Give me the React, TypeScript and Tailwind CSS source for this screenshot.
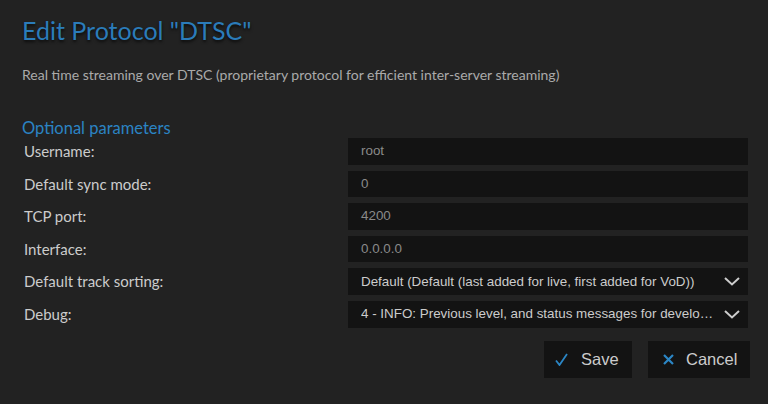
const fields = [
  { label: 'Username:', value: 'root' },
  { label: 'Default sync mode:', value: '0' },
  { label: 'TCP port:', value: '4200' },
  { label: 'Interface:', value: '0.0.0.0' },
];

const selects = [
  { label: 'Default track sorting:', value: 'Default (Default (last added for live, first added for VoD))' },
  { label: 'Debug:', value: '4 - INFO: Previous level, and status messages for developers' },
];

const heading = { fontFamily: 'Lato, "Open Sans", sans-serif' };
const body = { fontFamily: '"Liberation Sans", Arial, sans-serif' };

function Chevron() {
  return (
    <svg width="16" height="9" viewBox="0 0 16 9" fill="none" stroke="#cccccc" strokeWidth="2" className="shrink-0">
      <path d="M1 1 L8 7.5 L15 1" />
    </svg>
  );
}

export default function App() {
  return (
    <div className="min-h-[404px] bg-[#222222] px-[22px] pt-[14px] text-[#cccccc]" style={heading}>
      <h1 className="text-[25px] leading-[32px] text-[#2b7cba] [text-shadow:0_2px_3px_rgba(0,0,0,0.7)]">
        Edit Protocol "DTSC"
      </h1>
      <p className="mt-[19px] text-[14px] leading-[20px] text-[#aaaaaa]">
        Real time streaming over DTSC (proprietary protocol for efficient inter-server streaming)
      </p>

      <h2 className="mt-[33px] text-[16.5px] leading-[20px] text-[#2b84c4]">Optional parameters</h2>

      <div className="grid grid-cols-[326px_400px] gap-y-[6px]">
        {fields.map((f) => (
          <div key={f.label} className="contents">
            <div className="flex h-[26.6px] items-center pl-[2px] text-[15px]">{f.label}</div>
            <div
              className="flex h-[26.6px] items-center bg-[#131313] px-[13px] text-[13.4px] text-[#8a8a8a]"
              style={body}
            >
              {f.value}
            </div>
          </div>
        ))}
        {selects.map((s) => (
          <div key={s.label} className="contents">
            <div className="flex h-[26.6px] items-center pl-[2px] text-[15px]">{s.label}</div>
            <div
              className="flex h-[26.6px] items-center gap-[10px] bg-[#131313] pl-[13px] pr-[8px] text-[13.4px] text-[#cccccc]"
              style={body}
            >
              <span className="min-w-0 flex-1 truncate">{s.value}</span>
              <Chevron />
            </div>
          </div>
        ))}
      </div>

      <div className="mt-[13px] mr-[-4px] flex justify-end gap-[16px]" style={body}>
        <button className="flex h-[37px] w-[88px] items-center gap-[13px] bg-[#131313] pl-[11px] text-[16.5px] text-[#cccccc]">
          <svg width="13" height="13" viewBox="0 0 13 13" fill="none" stroke="#2b86c5" strokeWidth="1.8">
            <path d="M1 7.5 L4.5 12 L12 1" />
          </svg>
          Save
        </button>
        <button className="flex h-[37px] w-[102px] items-center gap-[12px] bg-[#131313] pl-[15px] text-[16.5px] text-[#cccccc]">
          <svg width="11" height="11" viewBox="0 0 11 11" fill="none" stroke="#2b86c5" strokeWidth="2.2">
            <path d="M1 1 L10 10 M10 1 L1 10" />
          </svg>
          Cancel
        </button>
      </div>
    </div>
  );
}
